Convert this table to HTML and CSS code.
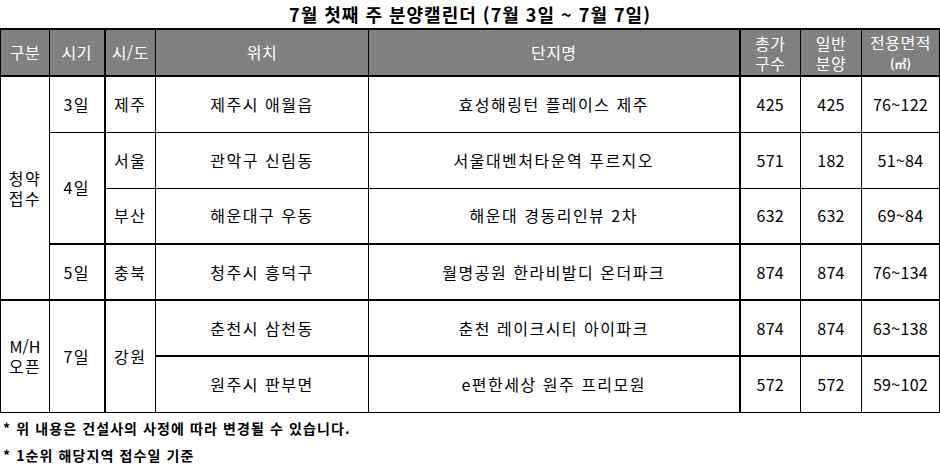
FILE: index.html
```html
<!DOCTYPE html>
<html lang="ko">
<head>
<meta charset="utf-8">
<link rel="stylesheet" href="styles.css">
</head>
<body>
<div class="page">
  <h1 class="title">7월 첫째 주 분양캘린더 (7월 3일 ~ 7월 7일)</h1>
  <table class="cal">
    <colgroup>
      <col class="c1"><col class="c2"><col class="c3"><col class="c4"><col class="c5"><col class="c6"><col class="c7"><col class="c8">
    </colgroup>
    <thead>
      <tr>
        <th>구분</th><th class="tr">시기</th><th>시/도</th><th>위치</th><th class="tr">단지명</th>
        <th class="two">총가<br>구수</th><th class="two">일반<br>분양</th><th class="two">전용면적<br><span class="unit">(㎡)</span></th>
      </tr>
    </thead>
    <tbody>
      <tr>
        <td rowspan="4" class="two">청약<br>접수</td>
        <td class="tr">3일</td><td>제주</td><td>제주시 애월읍</td><td class="tr">효성해링턴 플레이스 제주</td><td class="n">425</td><td class="n">425</td><td class="n">76~122</td>
      </tr>
      <tr>
        <td rowspan="2" class="tr">4일</td><td>서울</td><td>관악구 신림동</td><td class="tr">서울대벤처타운역 푸르지오</td><td class="n">571</td><td class="n">182</td><td class="n">51~84</td>
      </tr>
      <tr>
        <td>부산</td><td>해운대구 우동</td><td class="tr">해운대 경동리인뷰 2차</td><td class="n">632</td><td class="n">632</td><td class="n">69~84</td>
      </tr>
      <tr class="tb">
        <td class="tr">5일</td><td>충북</td><td>청주시 흥덕구</td><td class="tr">월명공원 한라비발디 온더파크</td><td class="n">874</td><td class="n">874</td><td class="n">76~134</td>
      </tr>
      <tr class="tb">
        <td rowspan="2" class="two"><span class="latin">M/H</span><br>오픈</td>
        <td rowspan="2" class="tr">7일</td><td rowspan="2">강원</td><td>춘천시 삼천동</td><td class="tr">춘천 레이크시티 아이파크</td><td class="n">874</td><td class="n">874</td><td class="n">63~138</td>
      </tr>
      <tr class="tb">
        <td>원주시 판부면</td><td class="tr">e편한세상 원주 프리모원</td><td class="n">572</td><td class="n">572</td><td class="n">59~102</td>
      </tr>
    </tbody>
  </table>
  <p class="note">* 위 내용은 건설사의 사정에 따라 변경될 수 있습니다.</p>
  <p class="note">* 1순위 해당지역 접수일 기준</p>
</div>
</body>
</html>
```
FILE: styles.css
```css
html, body {
  margin: 0;
  padding: 0;
  background: #fff;
}
.page {
  width: 940px;
  font-family: "Noto Sans CJK KR", "Noto Sans", sans-serif;
  color: #000;
}
.title {
  margin: 0;
  height: 28px;
  line-height: 28px;
  font-size: 18px;
  font-weight: bold;
  letter-spacing: 1px;
  text-align: center;
}
.cal {
  margin-left: 0;
  width: 939px;
  border-collapse: collapse;
  table-layout: fixed;
  font-size: 16px;
  letter-spacing: 1.5px;
}
.c1 { width: 49px; }
.c2 { width: 55px; }
.c3 { width: 51px; }
.c4 { width: 213px; }
.c5 { width: 371px; }
.c6 { width: 61px; }
.c7 { width: 61px; }
.c8 { width: 78px; }
.cal th, .cal td {
  border: 1px solid #000;
  text-align: center;
  vertical-align: middle;
  padding: 0;
  line-height: 19px;
}
.cal th.two, .cal td.two { line-height: 20px; }
.cal td.n { letter-spacing: 0.3px; }
.latin { letter-spacing: 0; }
.cal thead tr { height: 47px; }
.cal thead th {
  background: #808080;
  color: #fff;
  font-weight: normal;
  letter-spacing: 0.5px;
  border-top: 2px solid #000;
  border-bottom: 2px solid #000;
}
.cal th.tr, .cal td.tr { border-right: 2px solid #000; }
.cal tbody tr { height: 56px; }
.cal tbody tr.tb td { border-top: 2px solid #000; }
.unit { font-size: 12px; font-weight: bold; letter-spacing: 0; }
.note {
  margin: 0;
  font-size: 14px;
  font-weight: bold;
  letter-spacing: 1.1px;
  height: 27px;
  line-height: 30px;
  padding-left: 3px;
}
```
